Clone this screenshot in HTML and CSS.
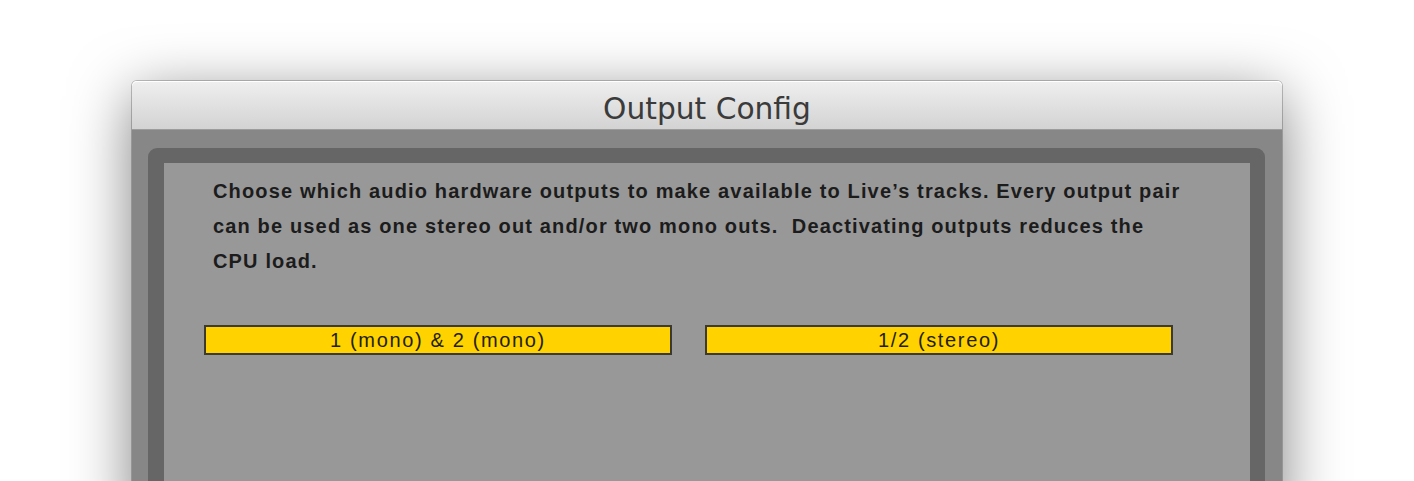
FILE: index.html
```html
<!DOCTYPE html>
<html>
<head>
<meta charset="utf-8">
<link rel="stylesheet" href="styles.css">
</head>
<body>
<div class="stage">
  <div class="window">
    <div class="titlebar">Output Config</div>
    <div class="body">
      <div class="frame">
        <div class="panel">
          <p class="desc">Choose which audio hardware outputs to make available to Live’s tracks. Every output pair<br>can be used as one stereo out and/or two mono outs.&nbsp; Deactivating outputs reduces the<br>CPU load.</p>
          <div class="outputs">
            <div class="out">1 (mono) &amp; 2 (mono)</div>
            <div class="out">1/2 (stereo)</div>
          </div>
        </div>
      </div>
    </div>
  </div>
</div>
</body>
</html>
```
FILE: styles.css
```css
html, body {
  margin: 0;
  height: 481px;
  overflow: hidden;
  background: #ffffff;
}
.stage {
  padding: 81px 0 0 132px;
}
.window {
  width: 1150px;
  height: 440px;
  border-radius: 5px 5px 0 0;
  box-shadow: 0 14px 60px rgba(0, 0, 0, 0.5), 0 0 0 1px rgba(0, 0, 0, 0.22);
  display: flex;
  flex-direction: column;
}
.titlebar {
  height: 48px;
  border-radius: 5px 5px 0 0;
  background: linear-gradient(#efefef, #d3d3d3);
  box-shadow: inset 0 1px 0 #ffffff;
  border-bottom: 1px solid #9c9c9c;
  text-align: center;
  font-family: "DejaVu Sans", sans-serif;
  font-size: 29.7px;
  line-height: 55px;
  color: #3b3b3b;
}
.body {
  flex: 1;
  background: #878787;
  padding: 18px 17px 0 16px;
  display: flex;
}
.frame {
  flex: 1;
  background: #666666;
  border-radius: 9px 9px 0 0;
  padding: 15px 15px 0 16px;
  display: flex;
}
.panel {
  flex: 1;
  background: #989898;
  padding: 11px 0 0 40px;
}
.desc {
  margin: 0 0 0 9px;
  font-family: "Liberation Sans", Arial, sans-serif;
  font-weight: bold;
  font-size: 20px;
  letter-spacing: 1.15px;
  line-height: 35px;
  color: #1c1c1c;
}
.outputs {
  display: flex;
  gap: 33px;
  margin-top: 46px;
}
.out {
  width: 464px;
  height: 26px;
  background: #ffd200;
  border: 2px solid #3c3a30;
  text-align: center;
  font-family: "Liberation Sans", Arial, sans-serif;
  font-size: 20px;
  letter-spacing: 1.65px;
  line-height: 27px;
  color: #241f0c;
}
```
